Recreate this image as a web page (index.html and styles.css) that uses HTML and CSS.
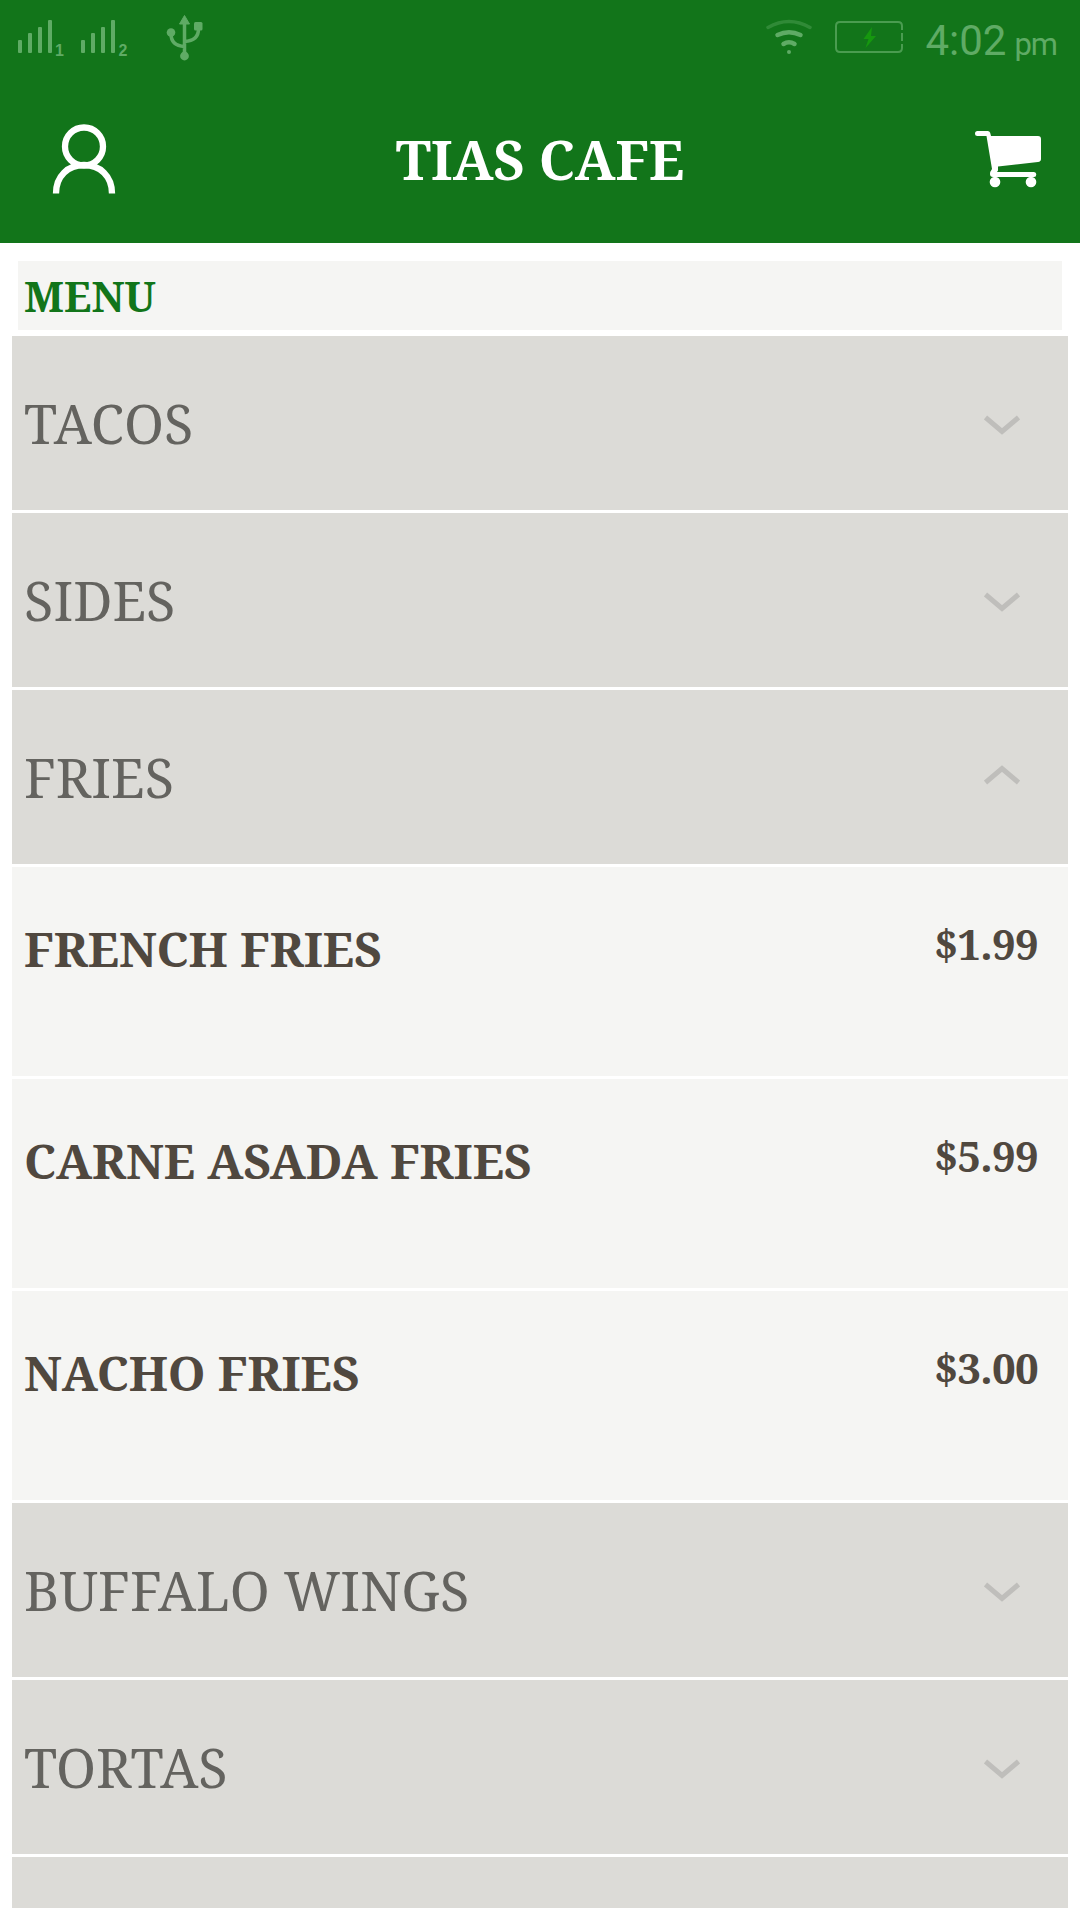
FILE: index.html
```html
<!DOCTYPE html>
<html lang="en">
  <head>
    <meta charset="UTF-8" />
    <meta name="viewport" content="width=device-width, initial-scale=1.0" />
    <title>Tias Cafe</title>
    <link rel="stylesheet" href="styles.css">
  </head>
  <body>
    <header class="header">
      <div class="status-bar">
        <svg class="status-signal" width="130" height="50" viewBox="0 0 130 50">
          <g class="status-fill">
            <rect x="3" y="28" width="4" height="13" rx="1" />
            <rect x="13" y="21" width="4" height="20" rx="1" />
            <rect x="23" y="15" width="4" height="26" rx="1" />
            <rect x="33" y="8" width="4" height="33" rx="1" />
            <rect x="66" y="28" width="4" height="13" rx="1" />
            <rect x="76" y="21" width="4" height="20" rx="1" />
            <rect x="86" y="15" width="4" height="26" rx="1" />
            <rect x="96" y="8" width="4" height="33" rx="1" />
            <text class="sim" x="40" y="44">1</text>
            <text class="sim" x="103.500" y="44">2</text>
          </g>
        </svg>
        <svg class="status-usb" width="40" height="50" viewBox="0 0 40 50">
          <g class="status-fill">
            <path d="M19.500 3.500l5 8.500h-10z" stroke="#5fab65" stroke-linejoin="round" />
            <rect x="29" y="10" width="8.500" height="8.500" rx="1.500" />
            <circle cx="6" cy="20.500" r="4.300" />
            <circle cx="19.500" cy="44" r="4.400" />
          </g>
          <path class="status-line" d="M19.500 10v32M6 22c0 8 5 12 13.500 12.500M33.500 17c0 8-5 12-14 12.500" />
        </svg>
        <svg class="status-wifi" width="46" height="40" viewBox="0 0 46 40">
          <path class="status-line wifi-dim" d="M2 11.500Q23-.500 44 11.500" />
          <path class="status-line wifi-inner" d="M11.500 19q11.500-5.500 23 0" />
          <path class="status-line wifi-inner" d="M17.500 28q5.500-3.500 11 0" />
          <circle class="status-fill" cx="23" cy="36" r="2" />
        </svg>
        <svg class="status-battery" width="70" height="34" viewBox="0 0 70 34">
          <path class="battery-line" d="M67 9V5q0-4-4-4H5Q1 1 1 5v22q0 4 4 4h58q4 0 4-4v-4M67 12v8" />
          <path class="battery-bolt" d="M37 6L28.500 18h5l-3 9L41 15h-5z" />
        </svg>
        <div class="clock">4:02<span class="clock-period">pm</span></div>
      </div>
      <div class="title-bar">
        <svg class="icon-user" width="64" height="70" viewBox="0 0 64 70">
          <circle cx="32" cy="22.500" r="19" />
          <path d="M4 69.500C4 52 16 41 32 41s28 11 28 28.500" />
        </svg>
        <h1>TIAS CAFE</h1>
        <svg class="icon-cart" width="68" height="58" viewBox="0 0 68 58">
          <path d="M3.500 1H13.500q2.500 0 3 3l.500 2H64q3 0 3 3v20q0 2.500-3 3L24 36.500v4l-1 1.500h37q2.300 0 2.300 2.500T60 47H19q-3 0-3-3 0-2.500 2-5L12.500 6h-9Q1 6 1 3.500T3.500 1z" />
          <circle cx="21" cy="52" r="5.300" />
          <circle cx="57" cy="52" r="5.300" />
        </svg>
      </div>
    </header>

    <main class="menu">
      <h2 class="menu-heading">MENU</h2>
      <div class="menu-list">
        <div class="category">
          <span>TACOS</span>
          <svg class="chevron" width="36" height="20" viewBox="0 0 36 20"><path d="M1.500 2.500l16.500 14 16.500-14" /></svg>
        </div>
        <div class="category">
          <span>SIDES</span>
          <svg class="chevron" width="36" height="20" viewBox="0 0 36 20"><path d="M1.500 2.500l16.500 14 16.500-14" /></svg>
        </div>
        <div class="category open">
          <span>FRIES</span>
          <svg class="chevron" width="36" height="20" viewBox="0 0 36 20"><path d="M1.500 2.500l16.500 14 16.500-14" /></svg>
        </div>
        <div class="item">
          <span class="item-name">FRENCH FRIES</span>
          <span class="price">$1.99</span>
        </div>
        <div class="item">
          <span class="item-name">CARNE ASADA FRIES</span>
          <span class="price">$5.99</span>
        </div>
        <div class="item">
          <span class="item-name">NACHO FRIES</span>
          <span class="price">$3.00</span>
        </div>
        <div class="category">
          <span>BUFFALO WINGS</span>
          <svg class="chevron" width="36" height="20" viewBox="0 0 36 20"><path d="M1.500 2.500l16.500 14 16.500-14" /></svg>
        </div>
        <div class="category">
          <span>TORTAS</span>
          <svg class="chevron" width="36" height="20" viewBox="0 0 36 20"><path d="M1.500 2.500l16.500 14 16.500-14" /></svg>
        </div>
        <div class="category"></div>
      </div>
    </main>
  </body>
</html>
```
FILE: styles.css
```css
:root {
  --green: #12751a;
  --status: #5fab65;
  --row: #dcdbd7;
  --row-light: #f5f5f3;
  --category-text: #64635f;
  --item-text: #50483f;
}

* {
  margin: 0;
  padding: 0;
  box-sizing: border-box;
}

body {
  height: 1920px;
  overflow: hidden;
  display: flex;
  flex-direction: column;
  background-color: #fff;
  font-family: "Noto Serif", "DejaVu Serif Condensed", "DejaVu Serif", serif;
}

svg {
  display: block;
  flex-shrink: 0;
}

.header {
  height: 243px;
  flex-shrink: 0;
  background-color: var(--green);
}

/* status bar */
.status-bar {
  height: 75px;
  display: flex;
  align-items: flex-start;
  padding: 12px 23px 0 15px;
}

.status-fill {
  fill: var(--status);
}

.status-line {
  fill: none;
  stroke: var(--status);
  stroke-width: 3.5;
  stroke-linecap: round;
}

.sim {
  font: bold 16px "Liberation Sans", sans-serif;
}

.status-usb {
  margin-left: 20px;
}

.status-wifi {
  margin: 4px 23px 0 auto;
}

.wifi-dim {
  opacity: 0.4;
}

.wifi-inner {
  stroke-width: 4.5;
}

.status-battery {
  margin: 9px 20px 0 0;
}

.battery-line {
  fill: none;
  stroke: #4a9c50;
  stroke-width: 2;
}

.battery-bolt {
  fill: #16980f;
}

.clock {
  margin-top: 5px;
  font-family: Roboto, sans-serif;
  font-size: 42px;
  line-height: 48px;
  color: var(--status);
}

.clock-period {
  margin-left: 8px;
  font-size: 31px;
  letter-spacing: -1px;
}

/* title bar */
.title-bar {
  height: 168px;
  display: grid;
  grid-template-columns: 130px 1fr 130px;
  padding-top: 49px;
}

.icon-user {
  margin-left: 52px;
  fill: none;
  stroke: #fff;
  stroke-width: 6.3;
}

.icon-cart {
  margin-top: 6px;
  margin-left: 24px;
  fill: #fff;
}

h1 {
  font-size: 54px;
  line-height: 71px;
  color: #fff;
  text-align: center;
}

/* menu */
.menu {
  flex: 1;
  min-height: 0;
  padding: 18px 12px 12px;
  display: flex;
  flex-direction: column;
}

.menu-heading {
  height: 69px;
  flex-shrink: 0;
  margin: 0 6px 6px;
  padding-left: 6px;
  background-color: var(--row-light);
  color: var(--green);
  font-size: 42px;
  line-height: 69px;
}

.menu-list {
  flex: 1;
  min-height: 0;
  overflow: hidden;
  display: flex;
  flex-direction: column;
  gap: 3px;
}

.category {
  height: 174px;
  flex-shrink: 0;
  display: flex;
  align-items: center;
  justify-content: space-between;
  padding: 0 48px 0 12px;
  background-color: var(--row);
  color: var(--category-text);
  font-size: 54px;
}

.chevron {
  margin-top: 4px;
  fill: none;
  stroke: #bfbebb;
  stroke-width: 5;
}

.open .chevron {
  margin: 0 0 5px;
  transform: rotate(180deg);
}

.item {
  height: 209px;
  flex-shrink: 0;
  display: flex;
  justify-content: space-between;
  padding: 46px 30px 0 12px;
  background-color: var(--row-light);
  color: var(--item-text);
  font-weight: bold;
}

.item-name {
  font-size: 48px;
  line-height: 72px;
  letter-spacing: -0.15px;
}

.price {
  font-size: 42px;
  line-height: 62px;
  letter-spacing: -0.7px;
}
```
